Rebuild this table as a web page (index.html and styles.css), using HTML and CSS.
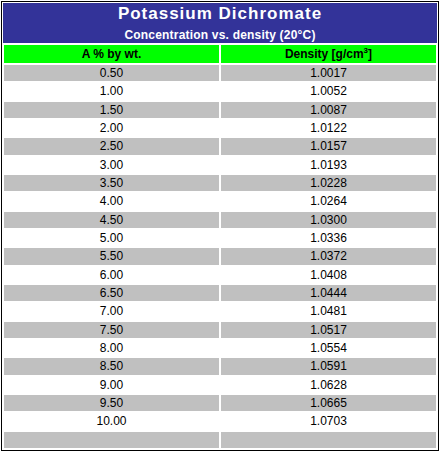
FILE: index.html
```html
<!DOCTYPE html>
<html>
<head>
<meta charset="utf-8">
<title>Potassium Dichromate</title>
<link rel="stylesheet" href="styles.css">
</head>
<body>
<div class="frame">
  <div class="banner">
    <div class="title">Potassium Dichromate</div>
    <div class="subtitle">Concentration vs. density (20°C)</div>
  </div>
  <div class="grid">
    <div class="head">A % by wt.</div>
    <div class="head">Density [g/cm<sup>3</sup>]</div>
    <div class="cell alt">0.50</div><div class="cell alt">1.0017</div>
    <div class="cell">1.00</div><div class="cell">1.0052</div>
    <div class="cell alt">1.50</div><div class="cell alt">1.0087</div>
    <div class="cell">2.00</div><div class="cell">1.0122</div>
    <div class="cell alt">2.50</div><div class="cell alt">1.0157</div>
    <div class="cell">3.00</div><div class="cell">1.0193</div>
    <div class="cell alt">3.50</div><div class="cell alt">1.0228</div>
    <div class="cell">4.00</div><div class="cell">1.0264</div>
    <div class="cell alt">4.50</div><div class="cell alt">1.0300</div>
    <div class="cell">5.00</div><div class="cell">1.0336</div>
    <div class="cell alt">5.50</div><div class="cell alt">1.0372</div>
    <div class="cell">6.00</div><div class="cell">1.0408</div>
    <div class="cell alt">6.50</div><div class="cell alt">1.0444</div>
    <div class="cell">7.00</div><div class="cell">1.0481</div>
    <div class="cell alt">7.50</div><div class="cell alt">1.0517</div>
    <div class="cell">8.00</div><div class="cell">1.0554</div>
    <div class="cell alt">8.50</div><div class="cell alt">1.0591</div>
    <div class="cell">9.00</div><div class="cell">1.0628</div>
    <div class="cell alt">9.50</div><div class="cell alt">1.0665</div>
    <div class="cell">10.00</div><div class="cell">1.0703</div>
    <div class="cell alt"></div><div class="cell alt"></div>
  </div>
</div>
</body>
</html>
```

FILE: styles.css
```css
html, body {
  margin: 0;
  padding: 0;
  background: #ffffff;
}

body {
  font-family: "Liberation Sans", Arial, sans-serif;
  color: #000000;
}

.frame {
  margin: 1px 0 0 1px;
  width: 436px;
  height: 448px;
  border: 1px solid #000000;
  display: flex;
  flex-direction: column;
}

.banner {
  margin: 1px 1px 0 1px;
  height: 40px;
  background: #333399;
  color: #ffffff;
  text-align: center;
  font-weight: bold;
}

.title {
  margin-top: 1px;
  font-size: 17px;
  line-height: 20px;
  letter-spacing: 1px;
}

.subtitle {
  margin-top: 3px;
  font-size: 12px;
  line-height: 16px;
  letter-spacing: 0.2px;
}

.grid {
  flex: 1;
  padding: 2px;
  display: grid;
  grid-template-columns: 1fr 1fr;
  grid-template-rows: 18px repeat(21, 1fr);
  gap: 2px;
  min-height: 0;
}

.head {
  background: #00ff00;
  font-size: 12px;
  font-weight: bold;
  line-height: 18px;
  text-align: center;
}

.head sup {
  font-size: 8px;
  line-height: 0;
  vertical-align: 5px;
}

.cell {
  font-size: 12px;
  text-align: center;
  display: flex;
  align-items: center;
  justify-content: center;
  overflow: hidden;
}

.alt {
  background: #c0c0c0;
}
```
